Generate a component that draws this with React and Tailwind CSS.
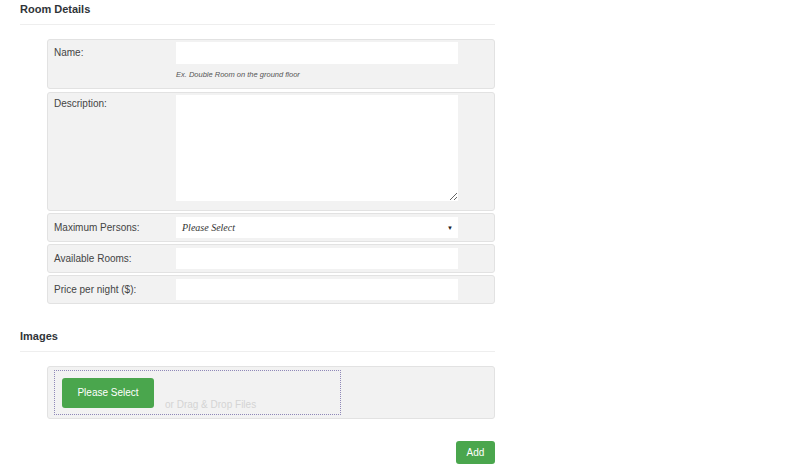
import React from "react";

export default function App() {
  return (
    <div className="w-[800px] h-[473px] bg-white font-['Liberation_Sans',Arial,sans-serif] text-[#333] overflow-hidden">
      <div className="pl-5 w-[495px]">
        <h3 className="h-[25px] leading-[18px] text-[11px] font-bold text-[#2f3438] border-b border-[#eeeeee]">
          Room Details
        </h3>
        <div className="ml-[27px] mt-[14px] flex flex-col text-[#444]">
          {/* Name */}
          <div className="h-[50px] flex border border-[#e2e2e2] rounded-[3px] bg-[#f2f2f2]">
            <div className="w-[128px] pl-[6px] pt-[6px] text-[10px] leading-[14px]">Name:</div>
            <div className="flex flex-col pt-[2px]">
              <input className="w-[282px] h-[22px] bg-white outline-none" />
              <div className="mt-[6px] text-[7.5px] leading-[10px] italic text-[#555]">
                Ex. Double Room on the ground floor
              </div>
            </div>
          </div>
          {/* Description */}
          <div className="mt-[3px] h-[119px] flex border border-[#e2e2e2] rounded-[3px] bg-[#f2f2f2]">
            <div className="w-[128px] pl-[6px] pt-[4px] text-[10px] leading-[14px]">Description:</div>
            <div className="pt-[2px]">
              <textarea className="block w-[282px] h-[106px] bg-white outline-none border-0" />
            </div>
          </div>
          {/* Maximum Persons */}
          <div className="mt-[2px] h-[29px] flex items-center border border-[#e2e2e2] rounded-[3px] bg-[#f2f2f2]">
            <div className="w-[128px] pl-[6px] text-[10px] leading-[14px]">Maximum Persons:</div>
            <div className="w-[282px] h-[21px] bg-white flex items-center justify-between pl-[6px] pr-[5px]">
              <span className="font-['Liberation_Serif',serif] italic text-[10px] text-[#333]">Please Select</span>
              <span className="text-[6px] text-[#222] leading-none">▼</span>
            </div>
          </div>
          {/* Available Rooms */}
          <div className="mt-[2px] h-[29px] flex items-center border border-[#e2e2e2] rounded-[3px] bg-[#f2f2f2]">
            <div className="w-[128px] pl-[6px] text-[10px] leading-[14px]">Available Rooms:</div>
            <input className="w-[282px] h-[21px] bg-white outline-none" />
          </div>
          {/* Price */}
          <div className="mt-[2px] h-[29px] flex items-center border border-[#e2e2e2] rounded-[3px] bg-[#f2f2f2]">
            <div className="w-[128px] pl-[6px] text-[10px] leading-[14px]">Price per night ($):</div>
            <input className="w-[282px] h-[21px] bg-white outline-none" />
          </div>
        </div>

        <h3 className="mt-[23px] h-[25px] leading-[18px] text-[11px] font-bold text-[#2f3438] border-b border-[#eeeeee]">
          Images
        </h3>
        <div className="ml-[27px] mt-[14px] h-[53px] border border-[#e2e2e2] rounded-[3px] bg-[#f2f2f2] pl-[6px] pt-[3px]">
          <div className="w-[287px] h-[45px] border border-dotted border-[#8f88b8] flex items-start pl-[7px] pt-[7px]">
            <button className="w-[92px] h-[30px] rounded-[3px] bg-[#4aa64d] text-white text-[10px] leading-[30px] text-center">
              Please Select
            </button>
            <span className="ml-[11px] mt-[20px] text-[10px] leading-[14px] text-[#d4d4d4]">or Drag &amp; Drop Files</span>
          </div>
        </div>
        <div className="flex justify-end mt-[22px]">
          <button className="w-[39px] h-[23px] rounded-[3px] bg-[#4aa64d] text-white text-[10px] leading-[23px] text-center">
            Add
          </button>
        </div>
      </div>
    </div>
  );
}
